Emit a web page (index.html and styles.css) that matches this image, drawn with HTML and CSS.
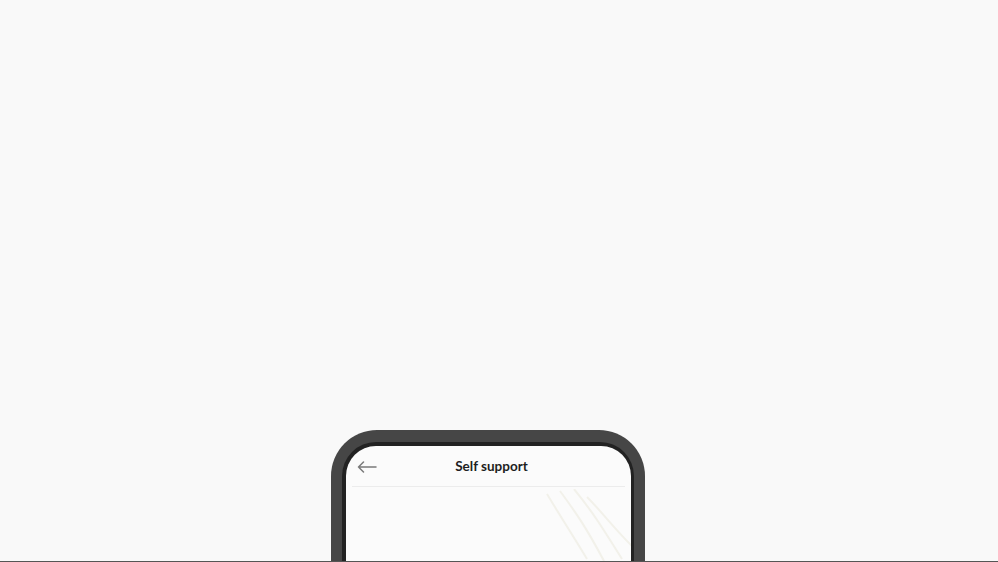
FILE: index.html
```html
<!DOCTYPE html>
<html lang="en">
<head>
<meta charset="utf-8">
<title>Self support</title>
<link rel="stylesheet" href="styles.css">
</head>
<body>
<main class="stage">
  <div class="phone">
    <div class="bezel">
      <div class="screen">
        <header class="topbar">
          <button class="back" aria-label="Back">
            <svg width="20" height="12" viewBox="0 0 20 12" fill="none" stroke="#7a7a7a" stroke-width="1.5" stroke-linecap="round" stroke-linejoin="round"><path d="M19 6H1.5M6.5 1L1.5 6l5 5"/></svg>
          </button>
          <h1 class="title">Self support</h1>
          <span class="spacer"></span>
        </header>
        <div class="content">
          <svg class="waves" width="100" height="80" viewBox="0 0 100 80" fill="none" stroke="#f2f1ea" stroke-width="2">
            <path d="M5 5 C20 30 30 45 45 70"/>
            <path d="M18 2 C35 25 45 40 62 72"/>
            <path d="M32 0 C50 22 60 38 80 70"/>
            <path d="M45 8 C62 25 72 40 95 62"/>
          </svg>
        </div>
      </div>
    </div>
  </div>
</main>
<div class="baseline"></div>
</body>
</html>
```
FILE: styles.css
```css
html, body {
  margin: 0;
  padding: 0;
  height: 100%;
  overflow: hidden;
}
body {
  background: #f9f9f9;
  font-family: Lato, "Open Sans", sans-serif;
  display: flex;
  flex-direction: column;
}
.stage {
  flex: 1;
  overflow: hidden;
  padding-top: 430px;
  padding-left: 331px;
}
.phone {
  width: 314px;
  height: 200px;
  background: #464646;
  border-radius: 46px 46px 0 0;
  padding: 12px 11px 0 11px;
  box-sizing: border-box;
}
.bezel {
  height: 100%;
  background: #222;
  border-radius: 34px 34px 0 0;
  padding: 4px 3px 0 4px;
  box-sizing: border-box;
}
.screen {
  height: 100%;
  background: #fbfbfb;
  border-radius: 30px 30px 0 0;
  overflow: hidden;
  padding: 0 6px;
}
.topbar {
  height: 40px;
  display: flex;
  align-items: center;
  border-bottom: 1.5px solid #ececec;
}
.back {
  width: 40px;
  border: 0;
  background: none;
  padding: 0 0 0 5px;
  display: flex;
  align-items: center;
  margin-top: 2px;
}
.title {
  flex: 1;
  margin: 0;
  padding-left: 6px;
  text-align: center;
  font-size: 13.5px;
  font-weight: 700;
  color: #1e1e1e;
}
.spacer {
  width: 40px;
}
.content {
  position: relative;
  height: 80px;
}
.waves {
  position: absolute;
  left: 190px;
  top: 2px;
}
.baseline {
  height: 1px;
  background: #555;
}
```
